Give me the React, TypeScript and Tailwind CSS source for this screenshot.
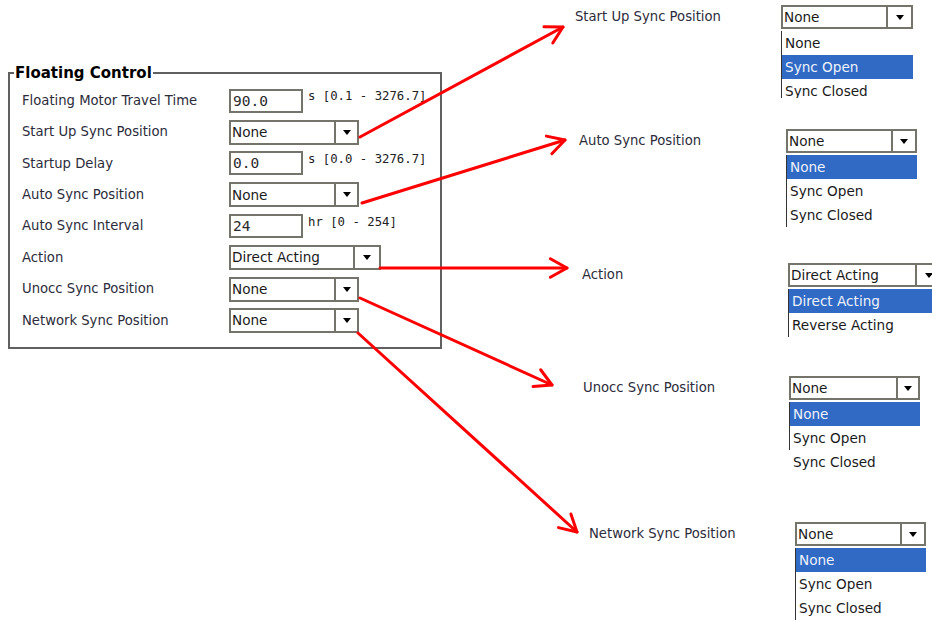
import type { ReactNode } from 'react'

const BORDER = 'border-[#74746a]'

const ARROWS: [number, number, number, number][] = [
  [360, 137, 563, 27],
  [362, 203, 565, 140],
  [380, 268, 567, 268],
  [360, 298, 552, 385],
  [358, 333, 577, 532],
]

function arrowHead(x1: number, y1: number, x2: number, y2: number) {
  const a = Math.atan2(y2 - y1, x2 - x1)
  const len = 19
  const spread = (29 * Math.PI) / 180
  const p1 = [x2 - len * Math.cos(a - spread), y2 - len * Math.sin(a - spread)]
  const p2 = [x2 - len * Math.cos(a + spread), y2 - len * Math.sin(a + spread)]
  return `M${p1[0]} ${p1[1]} L${x2} ${y2} L${p2[0]} ${p2[1]}`
}

function Tri() {
  return (
    <svg width="8" height="5" viewBox="0 0 8 5">
      <path d="M0 0h8L4 5z" fill="#000" />
    </svg>
  )
}

function Select({ value, w, btn = 'w-[23px]', h = 'h-[25px]' }: { value: string; w: string; btn?: string; h?: string }) {
  return (
    <div className={`flex shrink-0 border-2 ${BORDER} bg-white ${w} ${h}`}>
      <span className="flex-1 pl-[1px] flex items-center whitespace-nowrap overflow-hidden text-[13.6px] text-[#1a1a1a]">{value}</span>
      <span className={`border-l-2 ${BORDER} flex items-center justify-center shrink-0 ${btn}`}>
        <Tri />
      </span>
    </div>
  )
}

function NumBox({ value }: { value: string }) {
  return (
    <div className={`w-[74px] h-[24px] shrink-0 border-2 ${BORDER} bg-white flex items-end pl-[2px] font-['DejaVu_Sans_Mono',monospace] text-[14.5px] leading-[19px] text-[#2a2a2a]`}>
      {value}
    </div>
  )
}

function Row({ label, children }: { label: string; children: ReactNode }) {
  return (
    <div className="flex items-center h-[31.4px]">
      <span className="w-[207px] shrink-0">{label}</span>
      {children}
    </div>
  )
}

function Units({ text }: { text: string }) {
  return (
    <span className="self-start mt-[4px] ml-[5px] font-['DejaVu_Sans_Mono',monospace] text-[12.3px] leading-[15px] text-[#222] whitespace-nowrap">
      {text}
    </span>
  )
}

type Opt = { label: string; on?: boolean; edge?: boolean }

function DropNode({ left, top, w, btn, value, opts, listH }: {
  left: string; top: string; w: string; btn: string; value: string; opts: Opt[]; listH: string
}) {
  return (
    <div className={`absolute flex flex-col ${left} ${top}`}>
      <Select value={value} w={w} btn={btn} h="h-[24px]" />
      <div className={`flex flex-col pt-[2px] overflow-hidden text-[13.6px] ${listH} ${w}`}>
        {opts.map(o => (
          <div key={o.label}
            className={`h-[24px] shrink-0 pl-[3px] flex items-center whitespace-nowrap ${o.edge ? 'border-l border-[#333]' : 'border-l border-transparent'} ${o.on ? 'bg-[#316ac5] text-[#eef2fa]' : 'text-[#1a1a1a]'}`}>
            {o.label}
          </div>
        ))}
      </div>
    </div>
  )
}

export default function App() {
  return (
    <div className="relative w-[932px] h-[621px] overflow-hidden bg-white font-['DejaVu_Sans',sans-serif] text-[13.2px] text-[#2c2c3a]">
      {/* Panel */}
      <fieldset className="ml-[8px] mt-[64px] w-[434px] border-2 border-[#606060] pl-[12px] pt-[3px] pb-[11px]">
        <legend className="-ml-[8px] px-[1px] font-bold text-[15px] leading-[18px] text-black">Floating Control</legend>
        <Row label="Floating Motor Travel Time"><NumBox value="90.0" /><Units text="s [0.1 - 3276.7]" /></Row>
        <Row label="Start Up Sync Position"><Select value="None" w="w-[130px]" /></Row>
        <Row label="Startup Delay"><NumBox value="0.0" /><Units text="s [0.0 - 3276.7]" /></Row>
        <Row label="Auto Sync Position"><Select value="None" w="w-[130px]" /></Row>
        <Row label="Auto Sync Interval"><NumBox value="24" /><Units text="hr [0 - 254]" /></Row>
        <Row label="Action"><Select value="Direct Acting" w="w-[152px]" btn="w-[26px]" /></Row>
        <Row label="Unocc Sync Position"><Select value="None" w="w-[130px]" /></Row>
        <Row label="Network Sync Position"><Select value="None" w="w-[130px]" /></Row>
      </fieldset>

      {/* Diagram labels */}
      <span className="absolute left-[575px] top-[9px] leading-[16px]">Start Up Sync Position</span>
      <span className="absolute left-[579px] top-[133px] leading-[16px]">Auto Sync Position</span>
      <span className="absolute left-[582px] top-[267px] leading-[16px]">Action</span>
      <span className="absolute left-[583px] top-[380px] leading-[16px]">Unocc Sync Position</span>
      <span className="absolute left-[589px] top-[526px] leading-[16px]">Network Sync Position</span>

      {/* Dropdown examples */}
      <DropNode left="left-[781px]" top="top-[5px]" w="w-[132px]" btn="w-[25px]" value="None" listH="h-[69px]"
        opts={[{ label: 'None', edge: true }, { label: 'Sync Open', on: true, edge: true }, { label: 'Sync Closed', edge: true }]} />
      <DropNode left="left-[786px]" top="top-[129px]" w="w-[131px]" btn="w-[24px]" value="None" listH="h-[74px]"
        opts={[{ label: 'None', on: true, edge: true }, { label: 'Sync Open', edge: true }, { label: 'Sync Closed', edge: true }]} />
      <DropNode left="left-[788px]" top="top-[263px]" w="w-[155px]" btn="w-[26px]" value="Direct Acting" listH="h-[50px]"
        opts={[{ label: 'Direct Acting', on: true, edge: true }, { label: 'Reverse Acting', edge: true }]} />
      <DropNode left="left-[789px]" top="top-[376px]" w="w-[131px]" btn="w-[22px]" value="None" listH="h-[100px]"
        opts={[{ label: 'None', on: true, edge: true }, { label: 'Sync Open', edge: true }, { label: 'Sync Closed' }]} />
      <DropNode left="left-[795px]" top="top-[522px]" w="w-[131px]" btn="w-[24px]" value="None" listH="h-[80px]"
        opts={[{ label: 'None', on: true, edge: true }, { label: 'Sync Open', edge: true }, { label: 'Sync Closed', edge: true }]} />

      {/* Arrows */}
      <svg className="absolute inset-0 pointer-events-none" width="932" height="621">
        {ARROWS.map(([x1, y1, x2, y2], i) => (
          <g key={i} stroke="#ff0000" strokeWidth="3" fill="none" strokeLinecap="round" strokeLinejoin="round">
            <line x1={x1} y1={y1} x2={x2} y2={y2} />
            <path d={arrowHead(x1, y1, x2, y2)} />
          </g>
        ))}
      </svg>
    </div>
  )
}
